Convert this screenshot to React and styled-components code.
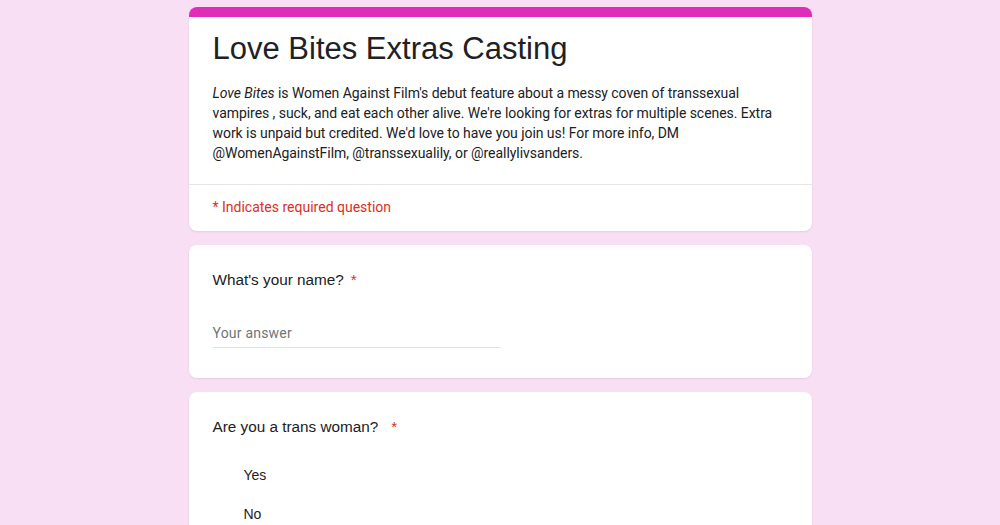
import React from 'react';
import styled, { createGlobalStyle } from 'styled-components';

const GlobalStyle = createGlobalStyle`
  html, body {
    margin: 0;
    padding: 0;
    background: #f8dff3;
  }
  body {
    font-family: Roboto, "Liberation Sans", Arial, sans-serif;
    color: #202124;
  }
`;

const Page = styled.div`
  width: 623px;
  margin: 0 auto;
  padding-top: 7px;
  display: flex;
  flex-direction: column;
  gap: 14px;
`;

const Card = styled.div`
  background: #fff;
  border-radius: 8px;
  box-shadow: 0 1px 2px rgba(120, 60, 110, 0.12);
  overflow: hidden;
`;

const TopBar = styled.div`
  height: 10px;
  background: #e02cb9;
`;

const Header = styled.div`
  padding: 10px 24px 21px;
`;

const Title = styled.h1`
  margin: 0;
  font-family: "Liberation Sans", Arial, sans-serif;
  font-size: 31px;
  font-weight: 400;
  line-height: 44px;
  color: #202124;
`;

const Description = styled.div`
  margin-top: 12px;
  font-size: 14px;
  line-height: 20px;
  color: #202124;
  letter-spacing: -0.05px;
`;

const Line = styled.div`
  white-space: nowrap;
`;

const Divider = styled.div`
  height: 1px;
  background: #e8e4e7;
`;

const Required = styled.div`
  padding: 13px 24px 15px;
  font-size: 14px;
  line-height: 18px;
  color: #d93025;
`;

const QuestionCard = styled(Card)`
  padding: ${p => p.pad || '24px'};
`;

const Question = styled.div`
  font-family: "Liberation Sans", Arial, sans-serif;
  font-size: 15.3px;
  line-height: 22px;
  color: #202124;
`;

const Star = styled.span`
  color: #d93025;
  margin-left: ${p => p.gap || 4}px;
`;

const Answer = styled.div`
  margin-top: 32px;
  width: 288px;
  padding-bottom: 4px;
  border-bottom: 1px solid #e6e3e6;
  font-size: 14px;
  line-height: 20px;
  color: #70757a;
  letter-spacing: 0.2px;
`;

const Options = styled.div`
  display: flex;
  flex-direction: column;
  gap: 19px;
  margin-top: 27px;
  padding-left: 31px;
`;

const Option = styled.div`
  font-family: "Liberation Sans", Arial, sans-serif;
  font-size: 14px;
  line-height: 20px;
  color: #202124;
`;

export default function App() {
  return (
    <>
      <GlobalStyle />
      <Page>
        <Card>
          <TopBar />
          <Header>
            <Title>Love Bites Extras Casting</Title>
            <Description>
              <Line><i>Love Bites</i> is Women Against Film's debut feature about a messy coven of transsexual</Line>
              <Line>vampires , suck, and eat each other alive. We're looking for extras for multiple scenes. Extra</Line>
              <Line>work is unpaid but credited. We'd love to have you join us! For more info, DM</Line>
              <Line>@WomenAgainstFilm, @transsexualily, or @reallylivsanders.</Line>
            </Description>
          </Header>
          <Divider />
          <Required>* Indicates required question</Required>
        </Card>
        <QuestionCard pad="24px 24px 30px">
          <Question>
            What's your name?<Star gap={7}>*</Star>
          </Question>
          <Answer>Your answer</Answer>
        </QuestionCard>
        <QuestionCard pad="24px 24px 40px">
          <Question>
            Are you a trans woman?<Star gap={13}>*</Star>
          </Question>
          <Options>
            <Option>Yes</Option>
            <Option>No</Option>
          </Options>
        </QuestionCard>
      </Page>
    </>
  );
}
